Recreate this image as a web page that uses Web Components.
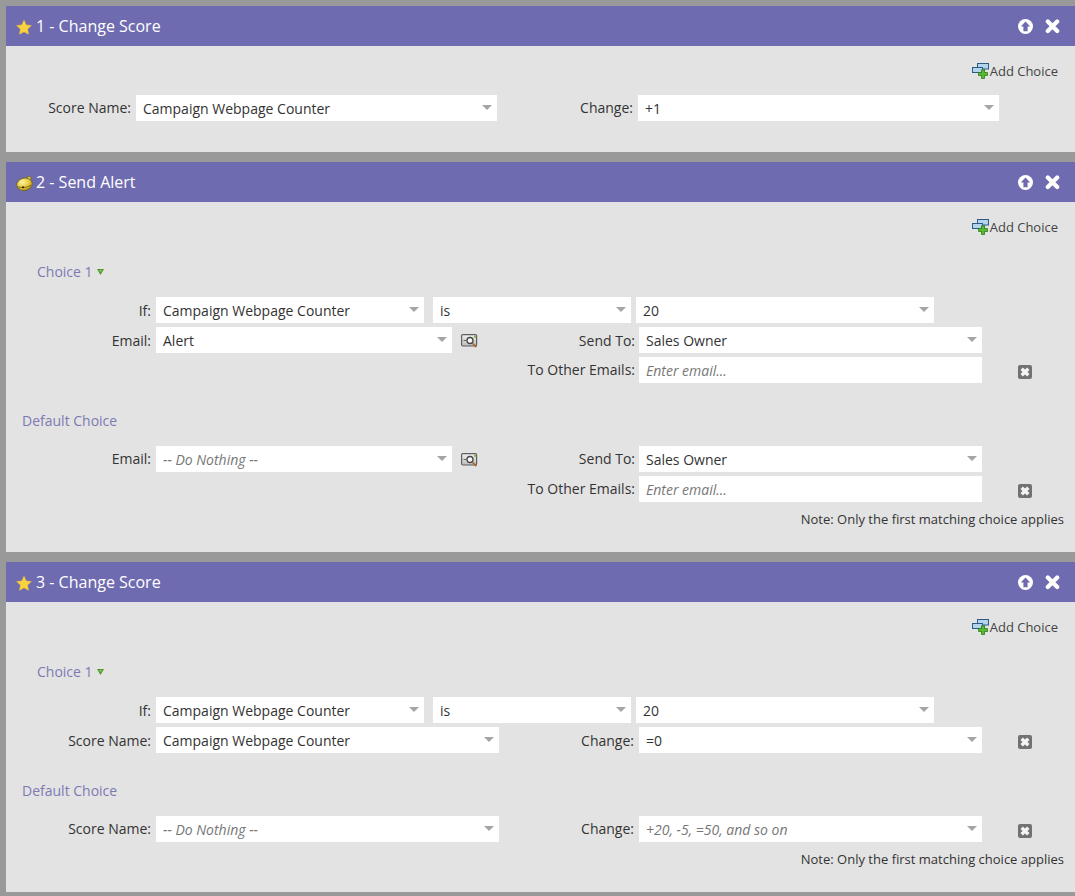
<!DOCTYPE html>
<html>
<head>
<meta charset="utf-8">
<title>Flow steps</title>
<style>
  html, body { margin: 0; background: #999; }
  body {
    padding: 6px 0 4px 6px;
    font-family: "Open Sans", "Liberation Sans", sans-serif;
    font-size: 14px;
    color: #333;
  }
</style>
</head>
<body>
  <flow-step index="1" title="Change Score" icon="star" compact>
    <form-row class="first">
      <labeled-select lift label="Score Name:" label-w="125" w="361" value="Campaign Webpage Counter"></labeled-select>
      <labeled-select lift label="Change:" label-w="136" w="361" value="+1"></labeled-select>
    </form-row>
  </flow-step>

  <flow-step index="2" title="Send Alert" icon="bell">
    <choice-heading text="Choice 1" open></choice-heading>
    <form-row>
      <labeled-select label="If:" label-w="145" w="268" value="Campaign Webpage Counter"></labeled-select>
      <labeled-select w="198" gap="9" value="is"></labeled-select>
      <labeled-select w="298" gap="5" value="20"></labeled-select>
    </form-row>
    <form-row>
      <labeled-select label="Email:" label-w="145" w="296" value="Alert"></labeled-select>
      <flow-icon name="preview"></flow-icon>
      <labeled-select tight label="Send To:" label-w="157" w="343" value="Sales Owner"></labeled-select>
    </form-row>
    <form-row>
      <labeled-select tight lift label="To Other Emails:" label-w="629" w="343" placeholder="Enter email..." text-input></labeled-select>
      <flow-icon name="remove"></flow-icon>
    </form-row>
    <choice-heading text="Default Choice"></choice-heading>
    <form-row>
      <labeled-select lift label="Email:" label-w="145" w="296" placeholder="-- Do Nothing --"></labeled-select>
      <flow-icon name="preview"></flow-icon>
      <labeled-select tight lift label="Send To:" label-w="157" w="343" value="Sales Owner"></labeled-select>
    </form-row>
    <form-row>
      <labeled-select tight lift label="To Other Emails:" label-w="629" w="343" placeholder="Enter email..." text-input></labeled-select>
      <flow-icon name="remove"></flow-icon>
    </form-row>
    <choice-note></choice-note>
  </flow-step>

  <flow-step index="3" title="Change Score" icon="star">
    <choice-heading text="Choice 1" open></choice-heading>
    <form-row>
      <labeled-select label="If:" label-w="145" w="268" value="Campaign Webpage Counter"></labeled-select>
      <labeled-select w="198" gap="9" value="is"></labeled-select>
      <labeled-select w="298" gap="5" value="20"></labeled-select>
    </form-row>
    <form-row>
      <labeled-select label="Score Name:" label-w="145" w="343" value="Campaign Webpage Counter"></labeled-select>
      <labeled-select label="Change:" label-w="135" w="343" value="=0"></labeled-select>
      <flow-icon name="remove"></flow-icon>
    </form-row>
    <choice-heading text="Default Choice"></choice-heading>
    <form-row>
      <labeled-select lift label="Score Name:" label-w="145" w="343" placeholder="-- Do Nothing --"></labeled-select>
      <labeled-select lift label="Change:" label-w="135" w="343" placeholder="+20, -5, =50, and so on"></labeled-select>
      <flow-icon name="remove"></flow-icon>
    </form-row>
    <choice-note></choice-note>
  </flow-step>

<script>
const ICONS = {
  star: `<svg width="16" height="16" viewBox="0 0 16 16"><path d="M8 1.300l2.200 4.700 5.100.6-3.800 3.500 1 5.100L8 12.700l-4.500 2.500 1-5.100L.7 6.600l5.100-.6z" fill="#fbd341" stroke="#f2c230" stroke-width=".6" stroke-linejoin="round"/></svg>`,
  bell: `<svg width="17" height="16" viewBox="0 0 17 16">
    <defs><radialGradient id="gold" cx=".4" cy=".3" r=".8"><stop offset="0" stop-color="#fff3a0"/><stop offset=".55" stop-color="#e5c83c"/><stop offset="1" stop-color="#a88c1c"/></radialGradient></defs>
    <circle cx="13" cy="3.300" r="2" fill="#e8cf4a" stroke="#6f6118" stroke-width=".8"/>
    <ellipse cx="8.500" cy="9.300" rx="7.800" ry="6.200" fill="url(#gold)" stroke="#6f6118" stroke-width=".8" transform="rotate(-12 8.500 9.300)"/>
    <path d="M1.300 11.300c3.500 1.900 9 1.700 14-1.200" fill="none" stroke="#7d6c1a" stroke-width="1"/>
    <circle cx="7" cy="12.300" r="1.100" fill="#2e2809"/>
  </svg>`,
  up: `<svg width="15" height="15" viewBox="0 0 15 15"><circle cx="7.500" cy="7.500" r="7.500" fill="#fff"/><path d="M7.500 2.600L12.200 7.600H9.600V12.200H5.400V7.600H2.800z" fill="#6f6bb0"/></svg>`,
  close: `<svg width="15" height="15" viewBox="0 0 15 15"><path d="M2.800 2.600l9.400 9.400M12.200 2.600l-9.400 9.400" stroke="#fff" stroke-width="4.200" stroke-linecap="round"/></svg>`,
  add: `<svg width="17" height="16" viewBox="0 0 17 16"><rect x="5.500" y=".5" width="11" height="5.500" fill="#b4d4ee" stroke="#2b5c88"/><rect x=".5" y="4.500" width="10" height="5" fill="#b4d4ee" stroke="#2b5c88"/><path d="M9.500 8h3V6.500" fill="none" stroke="#2b5c88"/><path d="M9.500 6.800h3v2.700h3v3h-3v3h-3v-3h-3v-3h3z" fill="#58b832" stroke="#2e7a18" stroke-width=".8"/></svg>`,
  preview: `<svg width="17" height="14" viewBox="0 0 17 14"><defs><linearGradient id="frame" x2="0" y2="1"><stop offset="0" stop-color="#f0f0f0"/><stop offset="1" stop-color="#bdbdbd"/></linearGradient></defs><rect x=".6" y=".6" width="15" height="11.400" rx="1.200" fill="url(#frame)" stroke="#5f5f5f" stroke-width="1.200"/><path d="M2.500 6.500h3" stroke="#666"/><circle cx="9" cy="6.500" r="3" fill="#f8f8f8" stroke="#444" stroke-width="1.300"/><path d="M11.300 9l4 4.200" stroke="#a8692a" stroke-width="1.700"/><rect x="13" y="1.500" width="2.200" height="2.200" fill="#8fb04a"/></svg>`,
  remove: `<svg width="14" height="14" viewBox="0 0 14 14"><rect width="14" height="14" rx="2" fill="#727272"/><path d="M3.700 3.700l6.600 6.600M10.300 3.700l-6.600 6.600" stroke="#f4f4f4" stroke-width="3.400"/></svg>`
};

class FlowIcon extends HTMLElement {
  connectedCallback() {
    const name = this.getAttribute('name');
    this.attachShadow({ mode: 'open' }).innerHTML = `
      <style>
        :host { display: block; line-height: 0; }
        :host([name="preview"]) { margin: 7px 0 0 9px; }
        :host([name="remove"]) { margin: 8px 0 0 36px; }
      </style>
      ${ICONS[name]}`;
  }
}
customElements.define('flow-icon', FlowIcon);

class FlowStep extends HTMLElement {
  connectedCallback() {
    const root = this.attachShadow({ mode: 'open' });
    root.innerHTML = `
      <style>
        :host { display: block; background: #e3e3e3; }
        :host(:not(:last-of-type)) { margin-bottom: 10px; }
        header {
          height: 40px;
          background: #6f6bb0;
          color: #fff;
          display: flex;
          align-items: center;
          padding: 0 15px 0 10px;
          font-size: 16px;
        }
        .icon { width: 20px; display: flex; line-height: 0; margin-top: 2px; }
        .name { flex: 1; }
        .tools { display: flex; align-items: center; gap: 12px; }
        .tools span { display: flex; line-height: 0; }
        .body { padding: 15px 0 23px; }
        :host([compact]) .body { padding-bottom: 31px; }
        .add {
          height: 20px;
          display: flex;
          justify-content: flex-end;
          align-items: center;
          padding-right: 17px;
          font-size: 13px;
          color: #444;
          gap: 1px;
        }
        .add span { display: flex; line-height: 0; }
      </style>
      <header>
        <span class="icon">${ICONS[this.getAttribute('icon')]}</span>
        <span class="name">${this.getAttribute('index')} - ${this.getAttribute('title')}</span>
        <span class="tools"><span>${ICONS.up}</span><span>${ICONS.close}</span></span>
      </header>
      <div class="body">
        <div class="add"><span>${ICONS.add}</span>Add Choice</div>
        <slot></slot>
      </div>`;
  }
}
customElements.define('flow-step', FlowStep);

class ChoiceHeading extends HTMLElement {
  connectedCallback() {
    const open = this.hasAttribute('open');
    this.attachShadow({ mode: 'open' }).innerHTML = `
      <style>
        :host {
          display: flex;
          align-items: center;
          gap: 4px;
          height: 20px;
          box-sizing: border-box;
          padding-bottom: 2px;
          margin: 25px 0 15px 31px;
          color: #7d7ab3;
          font-size: 14px;
        }
        :host(:not([open])) { margin: 28px 0 15px 16px; }
        svg { margin-top: 1px; }
      </style>
      ${this.getAttribute('text')}
      ${open ? `<svg width="7" height="6" viewBox="0 0 7 6"><path d="M0 0h7L3.500 6z" fill="#4f9a2c"/><path d="M2.300 1h2.400L3.500 3.200z" fill="#9ad27a"/></svg>` : ''}`;
  }
}
customElements.define('choice-heading', ChoiceHeading);

class FormRow extends HTMLElement {
  connectedCallback() {
    this.attachShadow({ mode: 'open' }).innerHTML = `
      <style>
        :host { display: flex; align-items: flex-start; height: 26px; margin-bottom: 4px; }
        :host(:last-of-type) { margin-bottom: 0; }
        :host(.first) { margin-top: 14px; }
      </style>
      <slot></slot>`;
  }
}
customElements.define('form-row', FormRow);

class LabeledSelect extends HTMLElement {
  connectedCallback() {
    const label = this.getAttribute('label');
    const placeholder = this.getAttribute('placeholder');
    const text = placeholder || this.getAttribute('value');
    this.attachShadow({ mode: 'open' }).innerHTML = `
      <style>
        :host { display: flex; align-items: center; height: 26px; flex: none; }
        .label { text-align: right; white-space: nowrap; color: #333; margin-right: 5px; }
        :host([tight]) .label { margin-right: 4px; }
        :host([lift]) .label { margin-bottom: 2px; }
        .box {
          background: #fff;
          height: 26px;
          box-sizing: border-box;
          padding: 0 7px;
          display: flex;
          align-items: center;
          justify-content: space-between;
          color: #333;
          white-space: nowrap;
        }
        .ph { font-style: italic; color: #777; }
        .arrow { width: 0; height: 0; border: 5px solid transparent; border-top: 5px solid #a5a5a5; border-bottom: 0; margin: -1px -2px 0 0; }
      </style>
      ${label ? `<span class="label" style="width:${this.getAttribute('label-w')}px">${label}</span>` : ''}
      <div class="box" style="width:${this.getAttribute('w')}px;${this.hasAttribute('gap') ? `margin-left:${this.getAttribute('gap')}px` : ''}">
        <span class="${placeholder ? 'ph' : ''}">${text}</span>
        ${this.hasAttribute('text-input') ? '' : '<span class="arrow"></span>'}
      </div>`;
  }
}
customElements.define('labeled-select', LabeledSelect);

class ChoiceNote extends HTMLElement {
  connectedCallback() {
    this.attachShadow({ mode: 'open' }).innerHTML = `
      <style>
        :host {
          display: block;
          height: 20px;
          line-height: 20px;
          margin-top: 7px;
          padding-right: 11px;
          text-align: right;
          font-size: 13px;
          color: #333;
        }
      </style>
      Note: Only the first matching choice applies`;
  }
}
customElements.define('choice-note', ChoiceNote);
</script>
</body>
</html>
